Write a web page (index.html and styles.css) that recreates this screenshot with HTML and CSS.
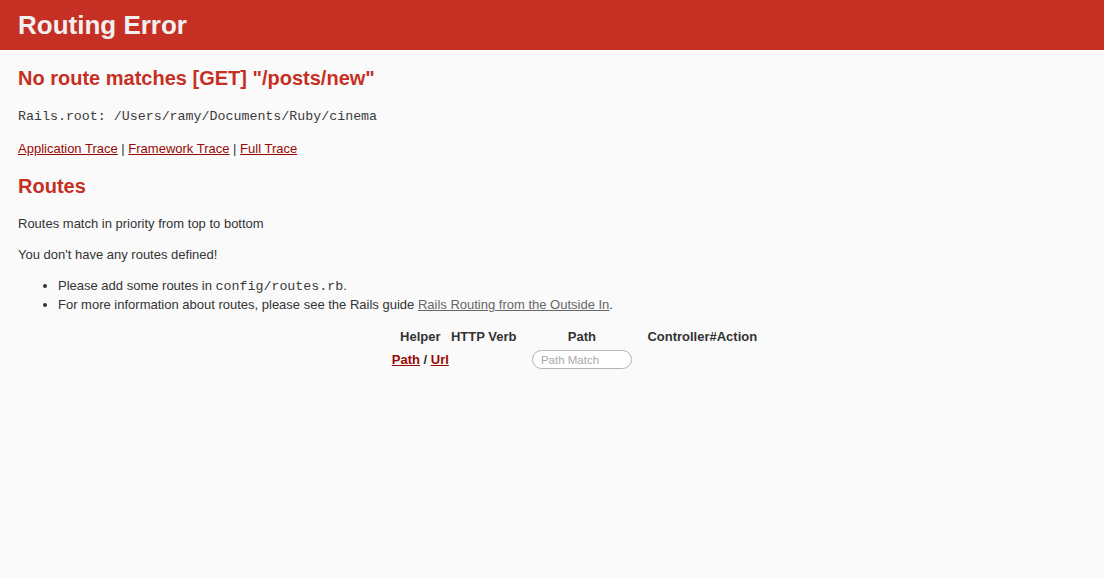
FILE: index.html
```html
<!DOCTYPE html>
<html>
<head>
<meta charset="utf-8">
<title>Action Controller: Exception caught</title>
<link rel="stylesheet" href="styles.css">
</head>
<body>
<header class="top">
  <h1 class="title">Routing Error</h1>
</header>
<div class="container">
  <h2 class="err">No route matches [GET] "/posts/new"</h2>
  <p class="root"><code class="mono">Rails.root: /Users/ramy/Documents/Ruby/cinema</code></p>
  <div class="traces">
    <a href="#" class="lnk">Application Trace</a> |
    <a href="#" class="lnk">Framework Trace</a> |
    <a href="#" class="lnk">Full Trace</a>
  </div>
  <h2 class="err">Routes</h2>
  <p class="txt">Routes match in priority from top to bottom</p>
  <p class="txt">You don't have any routes defined!</p>
  <ul class="list">
    <li>Please add some routes in <code class="mono">config/routes.rb</code>.</li>
    <li>For more information about routes, please see the Rails guide <a href="#" class="guide">Rails Routing from the Outside In</a>.</li>
  </ul>
  <div class="tablewrap">
    <table class="route-table">
      <thead>
        <tr>
          <th class="c1">Helper</th>
          <th class="c2">HTTP Verb</th>
          <th class="c3">Path</th>
          <th class="c4">Controller#Action</th>
        </tr>
        <tr class="bottom">
          <th class="c1"><a href="#" class="lnk">Path</a> / <a href="#" class="lnk">Url</a></th>
          <th class="c2"></th>
          <th class="c3"><input type="search" class="search" placeholder="Path Match"></th>
          <th class="c4"></th>
        </tr>
      </thead>
    </table>
  </div>
</div>
</body>
</html>
```

FILE: styles.css
```css
html, body {
  margin: 0;
  padding: 0;
}
body {
  background: #fafafa;
  color: #333;
  font-family: "Liberation Sans", Arial, sans-serif;
  font-size: 13px;
  line-height: 18px;
}
.top {
  background: #c52f24;
  color: #f0f0f0;
  padding: 6px 19px 6px 18px;
}
.title {
  margin: 5px 0;
  font-size: 26px;
  line-height: 28px;
  font-weight: bold;
}
.container {
  padding: 0 19px 0 18px;
}
.err {
  color: #c52f24;
  font-size: 20px;
  line-height: 25px;
  margin: 16px 0;
  font-weight: bold;
}
.root {
  margin: 13px 0 15px;
}
.mono {
  font-family: "Liberation Mono", "Courier New", monospace;
  font-size: 13.3px;
  line-height: 1;
  color: #3a3a3a;
}
.traces {
  margin: 13px 0;
}
.lnk {
  color: #980905;
}
.guide {
  color: #666;
}
.txt {
  margin: 13px 0 12px;
}
.list {
  margin: 0 0 13px;
  padding-left: 40px;
}
.list li {
  line-height: 19px;
}
.tablewrap {
  padding-left: 46px;
  padding-top: 1px;
}
.route-table {
  margin: 0 auto;
  border-collapse: collapse;
}
.route-table th {
  padding: 0 1px;
  font-size: 13px;
  font-weight: bold;
  text-align: center;
  line-height: 18px;
}
.route-table tr.bottom th {
  padding-top: 4px;
  line-height: 15px;
  vertical-align: middle;
}
.c3 {
  width: 127px;
}
.search {
  width: 100px;
  height: 19px;
  box-sizing: border-box;
  border: 1px solid #b5b5b5;
  border-radius: 10px;
  padding: 0 8px;
  font-family: "Liberation Sans", Arial, sans-serif;
  font-size: 11.5px;
  background: #fff;
  outline: none;
}
.search::placeholder {
  color: #a8a8a8;
}
```
